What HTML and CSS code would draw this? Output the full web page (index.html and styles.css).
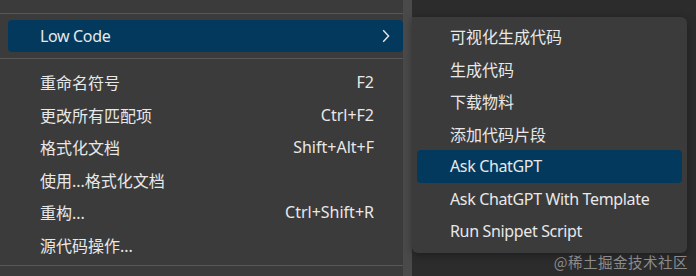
FILE: index.html
```html
<!DOCTYPE html>
<html lang="zh-CN">

<head>
    <meta charset="UTF-8">
    <title>Context Menu</title>
    <link rel="stylesheet" href="styles.css">
</head>

<body>
    <div class="screen">
        <!-- main context menu -->
        <div class="menu">
            <div class="menu-top"></div>
            <div class="separator"></div>
            <div class="menu-row active">
                <span class="label en">Low Code</span>
                <span class="arrow">
                    <svg width="8" height="14" viewBox="0 0 8 14">
                        <path d="M1.2 1.2 L6.6 7 L1.2 12.8" fill="none" stroke="#e8e8e8" stroke-width="1.4"/>
                    </svg>
                </span>
            </div>
            <div class="separator"></div>
            <div class="group">
                <div class="menu-row"><span class="label">重命名符号</span><span class="keys">F2</span><span class="arrow"></span></div>
                <div class="menu-row"><span class="label">更改所有匹配项</span><span class="keys">Ctrl+F2</span><span class="arrow"></span></div>
                <div class="menu-row"><span class="label">格式化文档</span><span class="keys">Shift+Alt+F</span><span class="arrow"></span></div>
                <div class="menu-row"><span class="label">使用...格式化文档</span><span class="arrow"></span></div>
                <div class="menu-row"><span class="label">重构...</span><span class="keys">Ctrl+Shift+R</span><span class="arrow"></span></div>
                <div class="menu-row"><span class="label">源代码操作...</span><span class="arrow"></span></div>
            </div>
            <div class="separator"></div>
        </div>
        <div class="scrollbar"></div>

        <!-- submenu for Low Code -->
        <div class="side">
            <div class="submenu">
                <div class="sub-row">可视化生成代码</div>
                <div class="sub-row">生成代码</div>
                <div class="sub-row">下载物料</div>
                <div class="sub-row">添加代码片段</div>
                <div class="sub-row active en">Ask ChatGPT</div>
                <div class="sub-row en">Ask ChatGPT With Template</div>
                <div class="sub-row en">Run Snippet Script</div>
            </div>
        </div>

        <div class="watermark">@稀土掘金技术社区</div>
    </div>
</body>

</html>
```

FILE: styles.css
```css
body {
    margin: 0;
    background-color: #2d2c2c;
    font-family: "Noto Sans", "Noto Sans CJK SC", sans-serif;
    font-size: 16px;
    color: #e8e8e8;
}

.screen {
    position: relative;
    display: flex;
    width: 696px;
    height: 276px;
    overflow: hidden;
}

.menu {
    width: 403px;
    flex-shrink: 0;
    background-color: #3b3b3b;
    display: flex;
    flex-direction: column;
}

.menu-top {
    height: 13px;
}

.separator {
    height: 1px;
    background-color: #585858;
    margin: 0 0 6px;
}

.menu-row {
    display: flex;
    align-items: center;
    height: 32px;
    margin-left: 8px;
    padding: 0 13px 0 32px;
    border-radius: 4px;
    white-space: nowrap;
}

.menu-row.active {
    background-color: #04395e;
    margin-bottom: 6px;
}

.group {
    display: flex;
    flex-direction: column;
    margin-top: 1px;
    margin-bottom: 4px;
}

.group .menu-row {
    height: 32.5px;
}

.label {
    flex: 1;
}

/* latin-only labels run a bit narrower than Noto Sans */
.en {
    letter-spacing: -0.35px;
}

.keys {
    text-align: right;
}

.arrow {
    width: 16px;
    display: flex;
    justify-content: flex-end;
}

.scrollbar {
    width: 9px;
    flex-shrink: 0;
    background-color: #4a4a4a;
}

.side {
    flex: 1;
    padding-top: 17px;
}

.submenu {
    width: 265px;
    padding: 3px 5px 5px;
    background-color: #3b3b3b;
    border-radius: 0 6px 6px 6px;
    box-shadow: 0 2px 8px rgba(0, 0, 0, 0.35);
}

.sub-row {
    display: flex;
    align-items: center;
    height: 32.5px;
    padding-left: 33px;
    border-radius: 4px;
    white-space: nowrap;
}

.sub-row.active {
    background-color: #04395e;
}

.watermark {
    position: absolute;
    right: 8px;
    bottom: 4px;
    font-size: 14.5px;
    color: #8b8b8b;
    font-family: "Noto Sans CJK SC", sans-serif;
    letter-spacing: 0.5px;
}
```
